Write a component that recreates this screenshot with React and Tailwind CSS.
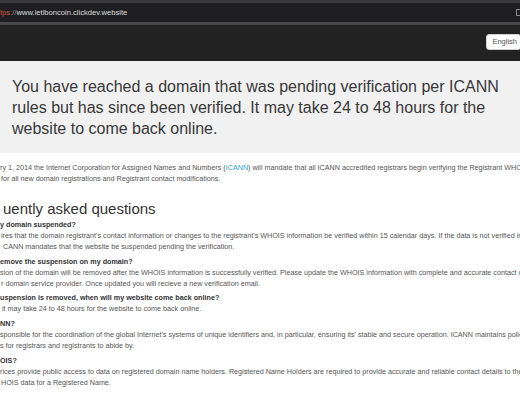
import React from 'react'

const faqs = [
    {
        q: 'y domain suspended?',
        a: [
            "ires that the domain registrant's contact information or changes to the registrant's WHOIS information be verified within 15 calendar days. If the data is not verified in",
            'CANN mandates that the website be suspended pending the verification.',
        ],
        pad: ['pl-[1px]', 'pl-[3px]'],
    },
    {
        q: 'emove the suspension on my domain?',
        a: [
            'sion of the domain will be removed after the WHOIS information is successfully verified. Please update the WHOIS information with complete and accurate contact details',
            'r domain service provider. Once updated you will recieve a new verification email.',
        ],
        pad: ['pl-0', 'pl-[1px]'],
    },
    {
        q: 'uspension is removed, when will my website come back online?',
        a: ['it may take 24 to 48 hours for the website to come back online.'],
        pad: ['pl-[2px]'],
    },
    {
        q: 'NN?',
        a: [
            "sponsible for the coordination of the global Internet's systems of unique identifiers and, in particular, ensuring its' stable and secure operation. ICANN maintains policies",
            's for registrars and registrants to abide by.',
        ],
        pad: ['pl-0', 'pl-0'],
    },
    {
        q: 'OIS?',
        a: [
            'rices provide public access to data on registered domain name holders. Registered Name Holders are required to provide accurate and reliable contact details to the',
            'HOIS data for a Registered Name.',
        ],
        pad: ['pl-0', 'pl-[1px]'],
    },
]

export default function App() {
    return (
        <div className="w-[520px] h-[397px] overflow-hidden bg-white font-['Liberation_Sans',Arial,sans-serif]">
            {/* browser chrome */}
            <div className="h-[3px] bg-[#3a3a3c]" />
            <div className="h-[19px] bg-[#1e1e20] flex items-center justify-between whitespace-nowrap">
                <div className="text-[7.6px] leading-none">
                    <span className="text-[#d2553f]">tps</span>
                    <span className="text-[#8a8a8a]">://</span>
                    <span className="text-[#dcdcdc]">www.letiboncoin.clickdev.website</span>
                </div>
                <div className="w-[4px] h-[7px] border border-[#888] border-r-0" />
            </div>
            <div className="h-[3px] bg-[#48484a]" />
            <div className="h-[36px] bg-[#222222] flex justify-end items-start pt-[9px]">
                <div className="h-[16px] pl-[5px] pr-[3px] -mr-[1px] bg-white border border-[#cfcfcf] rounded-[3px] flex items-center text-[7.5px] text-[#555]">
                    English
                </div>
            </div>

            {/* notice box */}
            <div className="h-[92px] bg-[#f1f1f1] pl-[12px] pt-[15px] text-[16px] leading-[21px] text-[#383838] whitespace-nowrap">
                <div>You have reached a domain that was pending verification per ICANN</div>
                <div>rules but has since been verified. It may take 24 to 48 hours for the</div>
                <div>website to come back online.</div>
            </div>

            {/* intro */}
            <div className="mt-[9px] text-[7.2px] leading-[11px] text-[#555] whitespace-nowrap">
                <div>
                    ry 1, 2014 the Internet Corporation for Assigned Names and Numbers (
                    <span className="text-[#2a9fd8]">ICANN</span>) will mandate that all ICANN accredited registrars begin verifying the Registrant WHOIS data
                </div>
                <div className="pl-[1px]">for all new domain registrations and Registrant contact modifications.</div>
            </div>

            <div className="mt-[16px] pl-[3px] text-[15px] leading-[18px] text-[#333]">uently asked questions</div>

            <div className="mt-[2px] flex flex-col gap-[4px] text-[7.2px] leading-[10.9px] whitespace-nowrap">
                {faqs.map((f) => (
                    <div key={f.q}>
                        <div className="font-bold text-[#333]">{f.q}</div>
                        {f.a.map((line, i) => (
                            <div key={i} className={`text-[#555] ${f.pad[i]}`}>
                                {line}
                            </div>
                        ))}
                    </div>
                ))}
            </div>
        </div>
    )
}
